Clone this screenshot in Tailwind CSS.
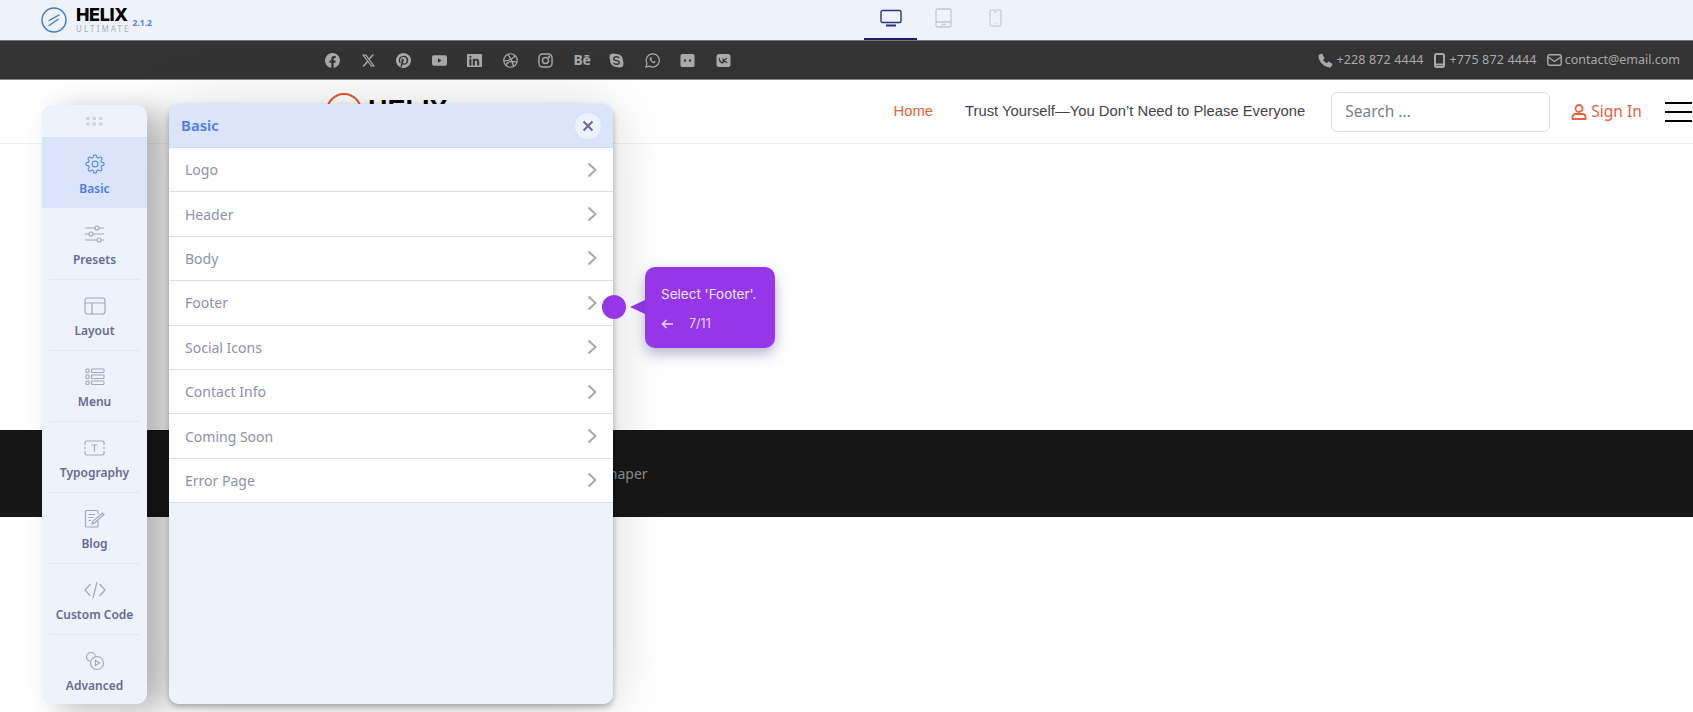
<!DOCTYPE html>
<html lang="en">
<head>
    <meta charset="UTF-8">
    <title>Helix Ultimate</title>
    <script src="https://cdn.jsdelivr.net/npm/@tailwindcss/browser@4"></script>
</head>
<body class="relative w-[1693px] h-[712px] overflow-hidden bg-white font-['Noto_Sans',sans-serif]">
<!-- top toolbar -->
<div class="flex h-[41px] items-center border-b border-[#777] bg-[#edf2fb]">
    <div class="ml-[41px] flex w-[823px] items-center">
        <svg class="h-[26px] w-[26px]" viewBox="0 0 26 26" fill="none" stroke="#3f78c9"><circle cx="13" cy="13" r="12" stroke-width="1.4"/><path d="M8 13.5 18 8M8 18.5 17 12.5" stroke-width="1.4" stroke-linecap="round"/></svg>
        <div class="ml-[9px] flex flex-col">
            <span class="font-['Inter',sans-serif] text-[18px] leading-[16px] font-extrabold tracking-[-0.4px] text-black">HELIX</span>
            <span class="mt-[1px] text-[8px] leading-[9px] tracking-[2.1px] text-[#a9adb8]">ULTIMATE</span>
        </div>
        <span class="mt-[7px] ml-[2px] text-[8.5px] font-bold text-[#5b7fe0]">2.1.2</span>
    </div>
    <div class="flex h-full">
        <div class="flex h-[40px] w-[53px] items-start justify-center border-b-2 border-[#16206b] pt-[9px]">
            <svg class="h-[18px] w-[22px]" viewBox="0 0 22 18" fill="none" stroke="#2d3580" stroke-width="1.4"><rect x="1" y="1.5" width="20" height="12" rx="1.5"/><path d="M6 16.5h10" stroke-width="2"/></svg>
        </div>
        <div class="ml-[16px] flex h-[40px] w-[20px] items-start justify-center pt-[8px]">
            <svg class="h-[20px] w-[17px]" viewBox="0 0 17 20" fill="none" stroke="#c3c8d8" stroke-width="1.3"><rect x="1" y="1" width="15" height="18" rx="1.5"/><path d="M1 14h15M6.5 16.5h4"/></svg>
        </div>
        <div class="ml-[35px] flex h-[40px] w-[14px] items-start justify-center pt-[9px]">
            <svg class="h-[18px] w-[13px]" viewBox="0 0 13 18" fill="none" stroke="#c3c8d8" stroke-width="1.2"><rect x="1" y="1" width="11" height="16" rx="1.5"/><path d="M5 3h3M6 14.5h1"/></svg>
        </div>
    </div>
</div>

<!-- social and contact bar -->
<div class="flex h-[39px] items-center border-b border-[#8a8a8a] bg-[#333333] text-[#a9a9a9]">
    <div class="ml-[325px] flex items-center gap-[20.5px]">
        <svg class="h-[15px] w-[15px]" viewBox="0 0 16 16" fill="currentColor"><path d="M8 0a8 8 0 0 0-1.3 15.9V10.3H4.7V8h2V6.2c0-2 1.2-3.1 3-3.1.9 0 1.8.2 1.8.2v2h-1c-1 0-1.3.6-1.3 1.2V8h2.2l-.4 2.3H9.2v5.6A8 8 0 0 0 8 0z"/></svg>
        <svg class="h-[15px] w-[15px] p-[1px]" viewBox="0 0 16 16" fill="currentColor"><path d="M12.6.75h2.454l-5.36 6.142L16 15.25h-4.937l-3.867-5.07-4.425 5.07H.316l5.733-6.57L0 .75h5.063l3.495 4.633L12.601.75Zm-.86 13.028h1.36L4.323 2.145H2.865z"/></svg>
        <svg class="h-[15px] w-[15px]" viewBox="0 0 16 16" fill="currentColor"><path d="M8 0a8 8 0 0 0-2.915 15.452c-.07-.633-.134-1.606.027-2.297.146-.625.938-3.977.938-3.977s-.239-.479-.239-1.187c0-1.113.645-1.943 1.448-1.943.682 0 1.012.512 1.012 1.127 0 .686-.437 1.712-.663 2.663-.188.796.4 1.446 1.185 1.446 1.422 0 2.515-1.5 2.515-3.664 0-1.915-1.377-3.254-3.342-3.254-2.276 0-3.612 1.707-3.612 3.471 0 .688.265 1.425.595 1.826a.24.24 0 0 1 .056.23c-.061.252-.196.796-.222.907-.035.146-.116.177-.268.107-1-.465-1.624-1.926-1.624-3.1 0-2.523 1.834-4.84 5.286-4.84 2.775 0 4.932 1.977 4.932 4.62 0 2.757-1.739 4.976-4.151 4.976-.811 0-1.573-.421-1.834-.919l-.498 1.902c-.181.695-.669 1.566-.995 2.097A8 8 0 1 0 8 0"/></svg>
        <svg class="h-[15px] w-[15px]" viewBox="0 0 16 16" fill="currentColor" fill-rule="evenodd"><path d="M2 2.5h12a2 2 0 0 1 2 2v7a2 2 0 0 1-2 2H2a2 2 0 0 1-2-2v-7a2 2 0 0 1 2-2zM6.4 5.7v4.6L10.4 8z"/></svg>
        <svg class="h-[15px] w-[15px]" viewBox="0 0 16 16" fill="currentColor" fill-rule="evenodd"><path d="M1 1h14a1 1 0 0 1 1 1v12a1 1 0 0 1-1 1H1a1 1 0 0 1-1-1V2a1 1 0 0 1 1-1zM2.5 6.2v7h2.2v-7zM3.6 2.8a1.2 1.2 0 1 0 0 2.4 1.2 1.2 0 0 0 0-2.4zM6.2 6.2v7h2.2V9.6c0-1 .5-1.6 1.3-1.6s1.1.6 1.1 1.6v3.6h2.2V9.2c0-2-1-3.1-2.6-3.1-1 0-1.7.5-2 1.1v-1z"/></svg>
        <svg class="h-[15px] w-[15px]" viewBox="0 0 16 16" fill="none" stroke="currentColor" stroke-width="1.3"><circle cx="8" cy="8" r="7.2"/><path d="M5 1.5C8 5 10.500 9.500 11.300 14.500M1 8.500C6 8.500 10 7 13 3M2.500 13C5 9.500 9.500 8 15 10"/></svg>
        <svg class="h-[15px] w-[15px]" viewBox="0 0 16 16" fill="none" stroke="currentColor" stroke-width="1.5"><rect x="1" y="1" width="14" height="14" rx="4"/><circle cx="8" cy="8" r="3.200"/><circle cx="12" cy="4" r=".5" fill="currentColor"/></svg>
        <span class="w-[15px] text-[14px] leading-4 font-bold tracking-[-0.3px] whitespace-nowrap">Bē</span>
        <svg class="h-[15px] w-[15px]" viewBox="0 0 16 16" fill="currentColor"><path d="M4.500.5C6 .5 6.800 1.100 8 1.100c3.800 0 6.900 3 6.900 6.900 0 .8.600 1.500.600 3.300a4.200 4.200 0 0 1-4.200 4.200c-1.500 0-2.200-.6-3.300-.6A6.900 6.900 0 0 1 1.100 8C1.100 7 .5 6.200.5 4.500a4 4 0 0 1 4-4z"/><path d="M11 5.500C10.500 4.500 9.300 4 8 4c-1.700 0-3 .800-3 2.100C5 9 11 7.300 11 10c0 1.300-1.300 2-3 2-1.500 0-2.600-.6-3.100-1.700" fill="none" stroke="#333" stroke-width="1.400"/></svg>
        <svg class="h-[15px] w-[15px]" viewBox="0 0 16 16" fill="none" stroke="currentColor" stroke-width="1.300"><path d="M1 15l1.100-3.800A7 7 0 1 1 4.800 14z"/><path d="M5.500 4.800c-.8.800-.6 2.200.6 3.800 1.300 1.600 2.900 2.500 4 2.200.8-.2 1.200-1 1.100-1.400L9.800 8.500l-.9.900C8 9 7 8 6.700 7l.8-.9-.8-1.500z" fill="currentColor" stroke="none"/></svg>
        <svg class="h-[15px] w-[15px]" viewBox="0 0 16 16" fill="currentColor" fill-rule="evenodd"><path d="M2.500 1h11a2 2 0 0 1 2 2v10a2 2 0 0 1-2 2h-11a2 2 0 0 1-2-2V3a2 2 0 0 1 2-2zM5.300 6.700a1.300 1.300 0 1 0 0 2.600 1.300 1.300 0 0 0 0-2.600zM10.700 6.700a1.300 1.300 0 1 0 0 2.600 1.300 1.300 0 0 0 0-2.600z"/></svg>
        <svg class="h-[15px] w-[15px]" viewBox="0 0 16 16" fill="currentColor"><rect x=".5" y="1" width="15" height="14" rx="3"/><path d="M3.500 5.500c.2 3 1.500 5 4 5V5.500M11.800 5.500 8 8l4 2.500" fill="none" stroke="#333" stroke-width="1.200"/></svg>
    </div>
    <div class="mr-[13px] ml-auto flex items-center text-[12.5px] text-[#a9a9a9]">
        <svg class="h-[15px] w-[15px]" viewBox="0 0 16 16" fill="currentColor"><path d="M3.600.8 1.300 1.900C.6 2.300.4 3 .5 3.800c.5 5.800 5.900 11.200 11.700 11.700.8.100 1.500-.1 1.900-.8l1.100-2.300c.2-.5 0-1-.4-1.300l-3-1.800c-.4-.2-.9-.2-1.200.2l-1.100 1.400C7.700 10.100 5.900 8.300 5.100 7.500l1.400-1.100c.4-.3.400-.8.200-1.200L4.900 1.200C4.600.8 4.100.6 3.600.8z"/></svg>
        <span class="ml-[3px] tracking-[0.15px]">+228 872 4444</span>
        <svg class="ml-[10px] h-[15px] w-[11px]" viewBox="0 0 11 15" fill="none" stroke="currentColor" stroke-width="2"><rect x="1" y="1" width="9" height="13" rx="1.500"/><path d="M1 11.500h9"/></svg>
        <span class="ml-[5px] tracking-[0.15px]">+775 872 4444</span>
        <svg class="ml-[10px] h-[12px] w-[15px]" viewBox="0 0 15 12" fill="none" stroke="currentColor" stroke-width="1.400"><rect x=".8" y=".8" width="13.400" height="10.400" rx="1.500"/><path d="M1 3l6.500 4.500L14 3"/></svg>
        <span class="ml-[3px]">contact@email.com</span>
    </div>
</div>

<!-- site header -->
<div class="flex h-[64px] items-center border-b border-[#f1f1f1] font-['Liberation_Sans',sans-serif]">
    <div class="ml-[326px] flex items-start">
        <svg class="mb-[2px] h-9 w-9" viewBox="0 0 36 36" fill="none" stroke="#e8582f" stroke-width="2"><circle cx="18" cy="18" r="17"/></svg>
        <span class="-mt-[3px] ml-[6px] text-[27px] font-bold text-black">HELIX</span>
    </div>
    <span class="ml-[446px] text-[14.8px] text-[#e8613a]">Home</span>
    <span class="ml-[32px] text-[14.8px] text-[#444]">Trust Yourself—You Don’t Need to Please Everyone</span>
    <div class="ml-[26px] flex h-[40px] w-[219px] items-center rounded-md border border-[#dcdcdc] pl-[13px] font-['Noto_Sans',sans-serif] text-[15.500px] text-[#7a7f85]">Search ...</div>
    <svg class="ml-[21px] h-[16px] w-[16px]" viewBox="0 0 16 16" fill="none" stroke="#e8613a" stroke-width="1.800"><circle cx="8" cy="4.500" r="3.500"/><path d="M1.500 15v-2a3 3 0 0 1 3-3h7a3 3 0 0 1 3 3v2z"/></svg>
    <span class="ml-[4px] font-['Noto_Sans',sans-serif] text-[15.500px] text-[#e8613a]">Sign In</span>
    <div class="ml-[23px] flex w-[27px] flex-col gap-[7px]">
        <span class="h-[2px] bg-black"></span>
        <span class="h-[2px] bg-black"></span>
        <span class="h-[2px] bg-black"></span>
    </div>
</div>

<!-- empty page body -->
<div class="h-[286px]"></div>

<!-- footer -->
<div class="flex h-[87px] items-center bg-[#171717] pl-[331px] text-[14px] text-[#8f8f8f]">
    <span>© 2024 Helix Ultimate. Designed by JoomShaper</span>
</div>

<!-- builder sidebar -->
<div class="absolute top-[105px] left-[42px] z-10 flex h-[599px] w-[105px] flex-col rounded-[10px] bg-[#edf2fb] text-[12px] font-semibold text-[#666b92] shadow-[16px_6px_30px_rgba(0,0,0,0.28)]">
    <div class="flex h-[32px] items-center justify-center">
        <svg class="h-[9px] w-[17px]" viewBox="0 0 17 9" fill="#cfd4de"><rect width="3.500" height="3"/><rect x="6.500" width="3.500" height="3"/><rect x="13" width="3.500" height="3"/><rect y="5.500" width="3.500" height="3"/><rect x="6.500" y="5.500" width="3.500" height="3"/><rect x="13" y="5.500" width="3.500" height="3"/></svg>
    </div>
    <div class="flex h-[71px] flex-col items-center bg-[#dae5fb] pt-[17px] text-[#4f78ea]">
        <svg class="h-[20px] w-[20px]" viewBox="0 0 24 24" fill="none" stroke="#6088ea" stroke-width="1.400" stroke-linecap="round" stroke-linejoin="round"><circle cx="12" cy="12" r="3.500"/><path d="M19.400 15a1.650 1.650 0 0 0 .33 1.820l.06.06a2 2 0 1 1-2.830 2.830l-.06-.06a1.650 1.650 0 0 0-2.820 1.170V21a2 2 0 0 1-4 0v-.09a1.650 1.650 0 0 0-2.820-1.170l-.06.06a2 2 0 1 1-2.830-2.830l.06-.06A1.650 1.650 0 0 0 3.090 14H3a2 2 0 0 1 0-4h.09a1.650 1.650 0 0 0 1.170-2.820l-.06-.06a2 2 0 1 1 2.830-2.830l.06.06A1.650 1.650 0 0 0 10 3.090V3a2 2 0 0 1 4 0v.09a1.650 1.650 0 0 0 2.820 1.170l.06-.06a2 2 0 1 1 2.830 2.830l-.06.06A1.650 1.650 0 0 0 20.910 10H21a2 2 0 0 1 0 4h-.09a1.650 1.650 0 0 0-1.510 1z"/></svg>
        <span class="mt-[6px]">Basic</span>
    </div>
    <div class="flex h-[71px] flex-col items-center pt-[16px]">
        <svg class="h-[20px] w-[21px]" viewBox="0 0 21 20" fill="none" stroke="#a4a8b8" stroke-width="1.100"><path d="M1 4h10M15 4h5M1 10h4M9 10h11M1 16h12M17 16h3"/><circle cx="13" cy="4" r="2"/><circle cx="7" cy="10" r="2"/><circle cx="15" cy="16" r="2"/></svg>
        <span class="mt-[7px]">Presets</span>
    </div>
    <div class="mx-[7px] h-px bg-[#e3e7f0]"></div>
    <div class="flex h-[70px] flex-col items-center pt-[16px]">
        <svg class="h-[20px] w-[22px]" viewBox="0 0 22 20" fill="none" stroke="#a4a8b8" stroke-width="1.200"><rect x="1" y="2" width="20" height="16" rx="2.500"/><path d="M1 7h20M8 7v11"/></svg>
        <span class="mt-[6px]">Layout</span>
    </div>
    <div class="mx-[7px] h-px bg-[#e3e7f0]"></div>
    <div class="flex h-[70px] flex-col items-center pt-[16px]">
        <svg class="h-[20px] w-[20px]" viewBox="0 0 20 20" fill="none" stroke="#a4a8b8" stroke-width="1.100"><rect x="1" y="2" width="3" height="3.500" rx=".8"/><rect x="1" y="8" width="3" height="3.500" rx=".8"/><rect x="1" y="14" width="3" height="3.500" rx=".8"/><rect x="6.500" y="2" width="12.500" height="3.500" rx=".8"/><rect x="6.500" y="8" width="12.500" height="3.500" rx=".8"/><rect x="6.500" y="14" width="12.500" height="3.500" rx=".8"/></svg>
        <span class="mt-[6px]">Menu</span>
    </div>
    <div class="mx-[7px] h-px bg-[#e3e7f0]"></div>
    <div class="flex h-[70px] flex-col items-center pt-[16px]">
        <svg class="h-[20px] w-[23px]" viewBox="0 0 23 20" fill="none" stroke="#a4a8b8" stroke-width="1.200"><path d="M2 7V4.500A1.500 1.500 0 0 1 3.500 3h16A1.500 1.500 0 0 1 21 4.500V7M2 13v2.500A1.500 1.500 0 0 0 3.500 17h16a1.500 1.500 0 0 0 1.500-1.500V13M2 9v2M21 9v2M8.500 7h6M11.500 7v6.500"/></svg>
        <span class="mt-[6px]">Typography</span>
    </div>
    <div class="mx-[7px] h-px bg-[#e3e7f0]"></div>
    <div class="flex h-[70px] flex-col items-center pt-[16px]">
        <svg class="h-[20px] w-[21px]" viewBox="0 0 21 20" fill="none" stroke="#a4a8b8" stroke-width="1.200"><path d="M14 11.500V17a1 1 0 0 1-1 1H2.500a1 1 0 0 1-1-1V2.500a1 1 0 0 1 1-1H13a1 1 0 0 1 1 1V5M4.500 5.500h6.500M4.500 8.500h5M4.500 11.500h2.500M8 15l1-3 9.500-8 1.500 1.500L10.500 14z"/></svg>
        <span class="mt-[6px]">Blog</span>
    </div>
    <div class="mx-[7px] h-px bg-[#e3e7f0]"></div>
    <div class="flex h-[70px] flex-col items-center pt-[16px]">
        <svg class="h-[20px] w-[22px]" viewBox="0 0 22 20" fill="none" stroke="#a4a8b8" stroke-width="1.200"><path d="M6.500 4 1 10l5.500 6M15.500 4 21 10l-5.500 6M13 2 9 18"/></svg>
        <span class="mt-[6px]">Custom Code</span>
    </div>
    <div class="mx-[7px] h-px bg-[#e3e7f0]"></div>
    <div class="flex flex-1 flex-col items-center pt-[16px]">
        <svg class="h-[20px] w-[20px]" viewBox="0 0 20 20" fill="none" stroke="#a4a8b8" stroke-width="1.100"><circle cx="6" cy="6" r="4.500"/><circle cx="12" cy="12" r="6.500" fill="#edf2fb"/><path d="M10.500 9.500v5l4-2.500z"/></svg>
        <span class="mt-[6px]">Advanced</span>
    </div>
</div>

<!-- settings panel -->
<div class="absolute top-[104px] left-[169px] z-10 flex h-[600px] w-[444px] flex-col overflow-hidden rounded-[10px] bg-[#edf2fb] text-[14px] text-[#8e90ab]">
    <div class="flex h-[44px] shrink-0 items-center justify-between border-b border-[#d2dcf5] bg-[#dae5fb] pr-[12px] pl-[12px]">
        <span class="text-[15px] font-semibold text-[#4f78ea]">Basic</span>
        <span class="flex h-[26px] w-[26px] items-center justify-center rounded-full bg-[#edf2fb]">
            <svg class="h-[12px] w-[12px]" viewBox="0 0 12 12" stroke="#666a9a" stroke-width="2"><path d="M1.500 1.500l9 9M10.500 1.500l-9 9"/></svg>
        </span>
    </div>
    <div class="flex h-[44.4px] shrink-0 items-center justify-between border-b border-[#dedede] bg-white pr-[16px] pl-[16px]">Logo<svg class="h-[16px] w-[10px]" viewBox="0 0 10 16" fill="none" stroke="#a8a8a8" stroke-width="2"><path d="M1.500 1.500 8.500 8l-7 6.500"/></svg></div>
    <div class="flex h-[44.4px] shrink-0 items-center justify-between border-b border-[#dedede] bg-white pr-[16px] pl-[16px]">Header<svg class="h-[16px] w-[10px]" viewBox="0 0 10 16" fill="none" stroke="#a8a8a8" stroke-width="2"><path d="M1.500 1.500 8.500 8l-7 6.500"/></svg></div>
    <div class="flex h-[44.4px] shrink-0 items-center justify-between border-b border-[#dedede] bg-white pr-[16px] pl-[16px]">Body<svg class="h-[16px] w-[10px]" viewBox="0 0 10 16" fill="none" stroke="#a8a8a8" stroke-width="2"><path d="M1.500 1.500 8.500 8l-7 6.500"/></svg></div>
    <div class="flex h-[44.4px] shrink-0 items-center justify-between border-b border-[#dedede] bg-white pr-[16px] pl-[16px]">Footer<svg class="h-[16px] w-[10px]" viewBox="0 0 10 16" fill="none" stroke="#a8a8a8" stroke-width="2"><path d="M1.500 1.500 8.500 8l-7 6.500"/></svg></div>
    <div class="flex h-[44.4px] shrink-0 items-center justify-between border-b border-[#dedede] bg-white pr-[16px] pl-[16px]">Social Icons<svg class="h-[16px] w-[10px]" viewBox="0 0 10 16" fill="none" stroke="#a8a8a8" stroke-width="2"><path d="M1.500 1.500 8.500 8l-7 6.500"/></svg></div>
    <div class="flex h-[44.4px] shrink-0 items-center justify-between border-b border-[#dedede] bg-white pr-[16px] pl-[16px]">Contact Info<svg class="h-[16px] w-[10px]" viewBox="0 0 10 16" fill="none" stroke="#a8a8a8" stroke-width="2"><path d="M1.500 1.500 8.500 8l-7 6.500"/></svg></div>
    <div class="flex h-[44.4px] shrink-0 items-center justify-between border-b border-[#dedede] bg-white pr-[16px] pl-[16px]">Coming Soon<svg class="h-[16px] w-[10px]" viewBox="0 0 10 16" fill="none" stroke="#a8a8a8" stroke-width="2"><path d="M1.500 1.500 8.500 8l-7 6.500"/></svg></div>
    <div class="flex h-[44.4px] shrink-0 items-center justify-between border-b border-[#dedede] bg-white pr-[16px] pl-[16px]">Error Page<svg class="h-[16px] w-[10px]" viewBox="0 0 10 16" fill="none" stroke="#a8a8a8" stroke-width="2"><path d="M1.500 1.500 8.500 8l-7 6.500"/></svg></div>
</div>
<!-- panel shadow sits under the sidebar -->
<div class="absolute top-[104px] left-[169px] h-[600px] w-[444px] rounded-[10px] shadow-[0_3px_6px_rgba(0,0,0,0.3),0_4px_60px_rgba(0,0,0,0.16)]"></div>

<!-- tour hotspot and tooltip -->
<div class="absolute top-[295px] left-[602px] z-20 h-[24px] w-[24px] rounded-full bg-[#9537e8]"></div>
<div class="absolute top-[300px] left-[630px] z-20 h-0 w-0 border-y-[7px] border-r-[15px] border-y-transparent border-r-[#9537e8]"></div>
<div class="absolute top-[267px] left-[645px] z-20 flex h-[81px] w-[130px] flex-col rounded-[10px] bg-[#9537e8] pt-[18px] pl-[16px] font-['Inter',sans-serif] text-[13.5px] text-[#f3e6fd] shadow-[0_6px_14px_rgba(60,40,120,0.35)]">
    <span class="leading-[18px]">Select 'Footer'.</span>
    <div class="mt-[12px] flex items-center text-[12.5px] text-[#ecd9fb]">
        <svg class="h-[10px] w-[12px]" viewBox="0 0 12 10" fill="none" stroke="currentColor" stroke-width="1.500"><path d="M12 5H1.500M5.500 1 1.500 5l4 4"/></svg>
        <span class="ml-[16px]">7/11</span>
    </div>
</div>
</body>
</html>
